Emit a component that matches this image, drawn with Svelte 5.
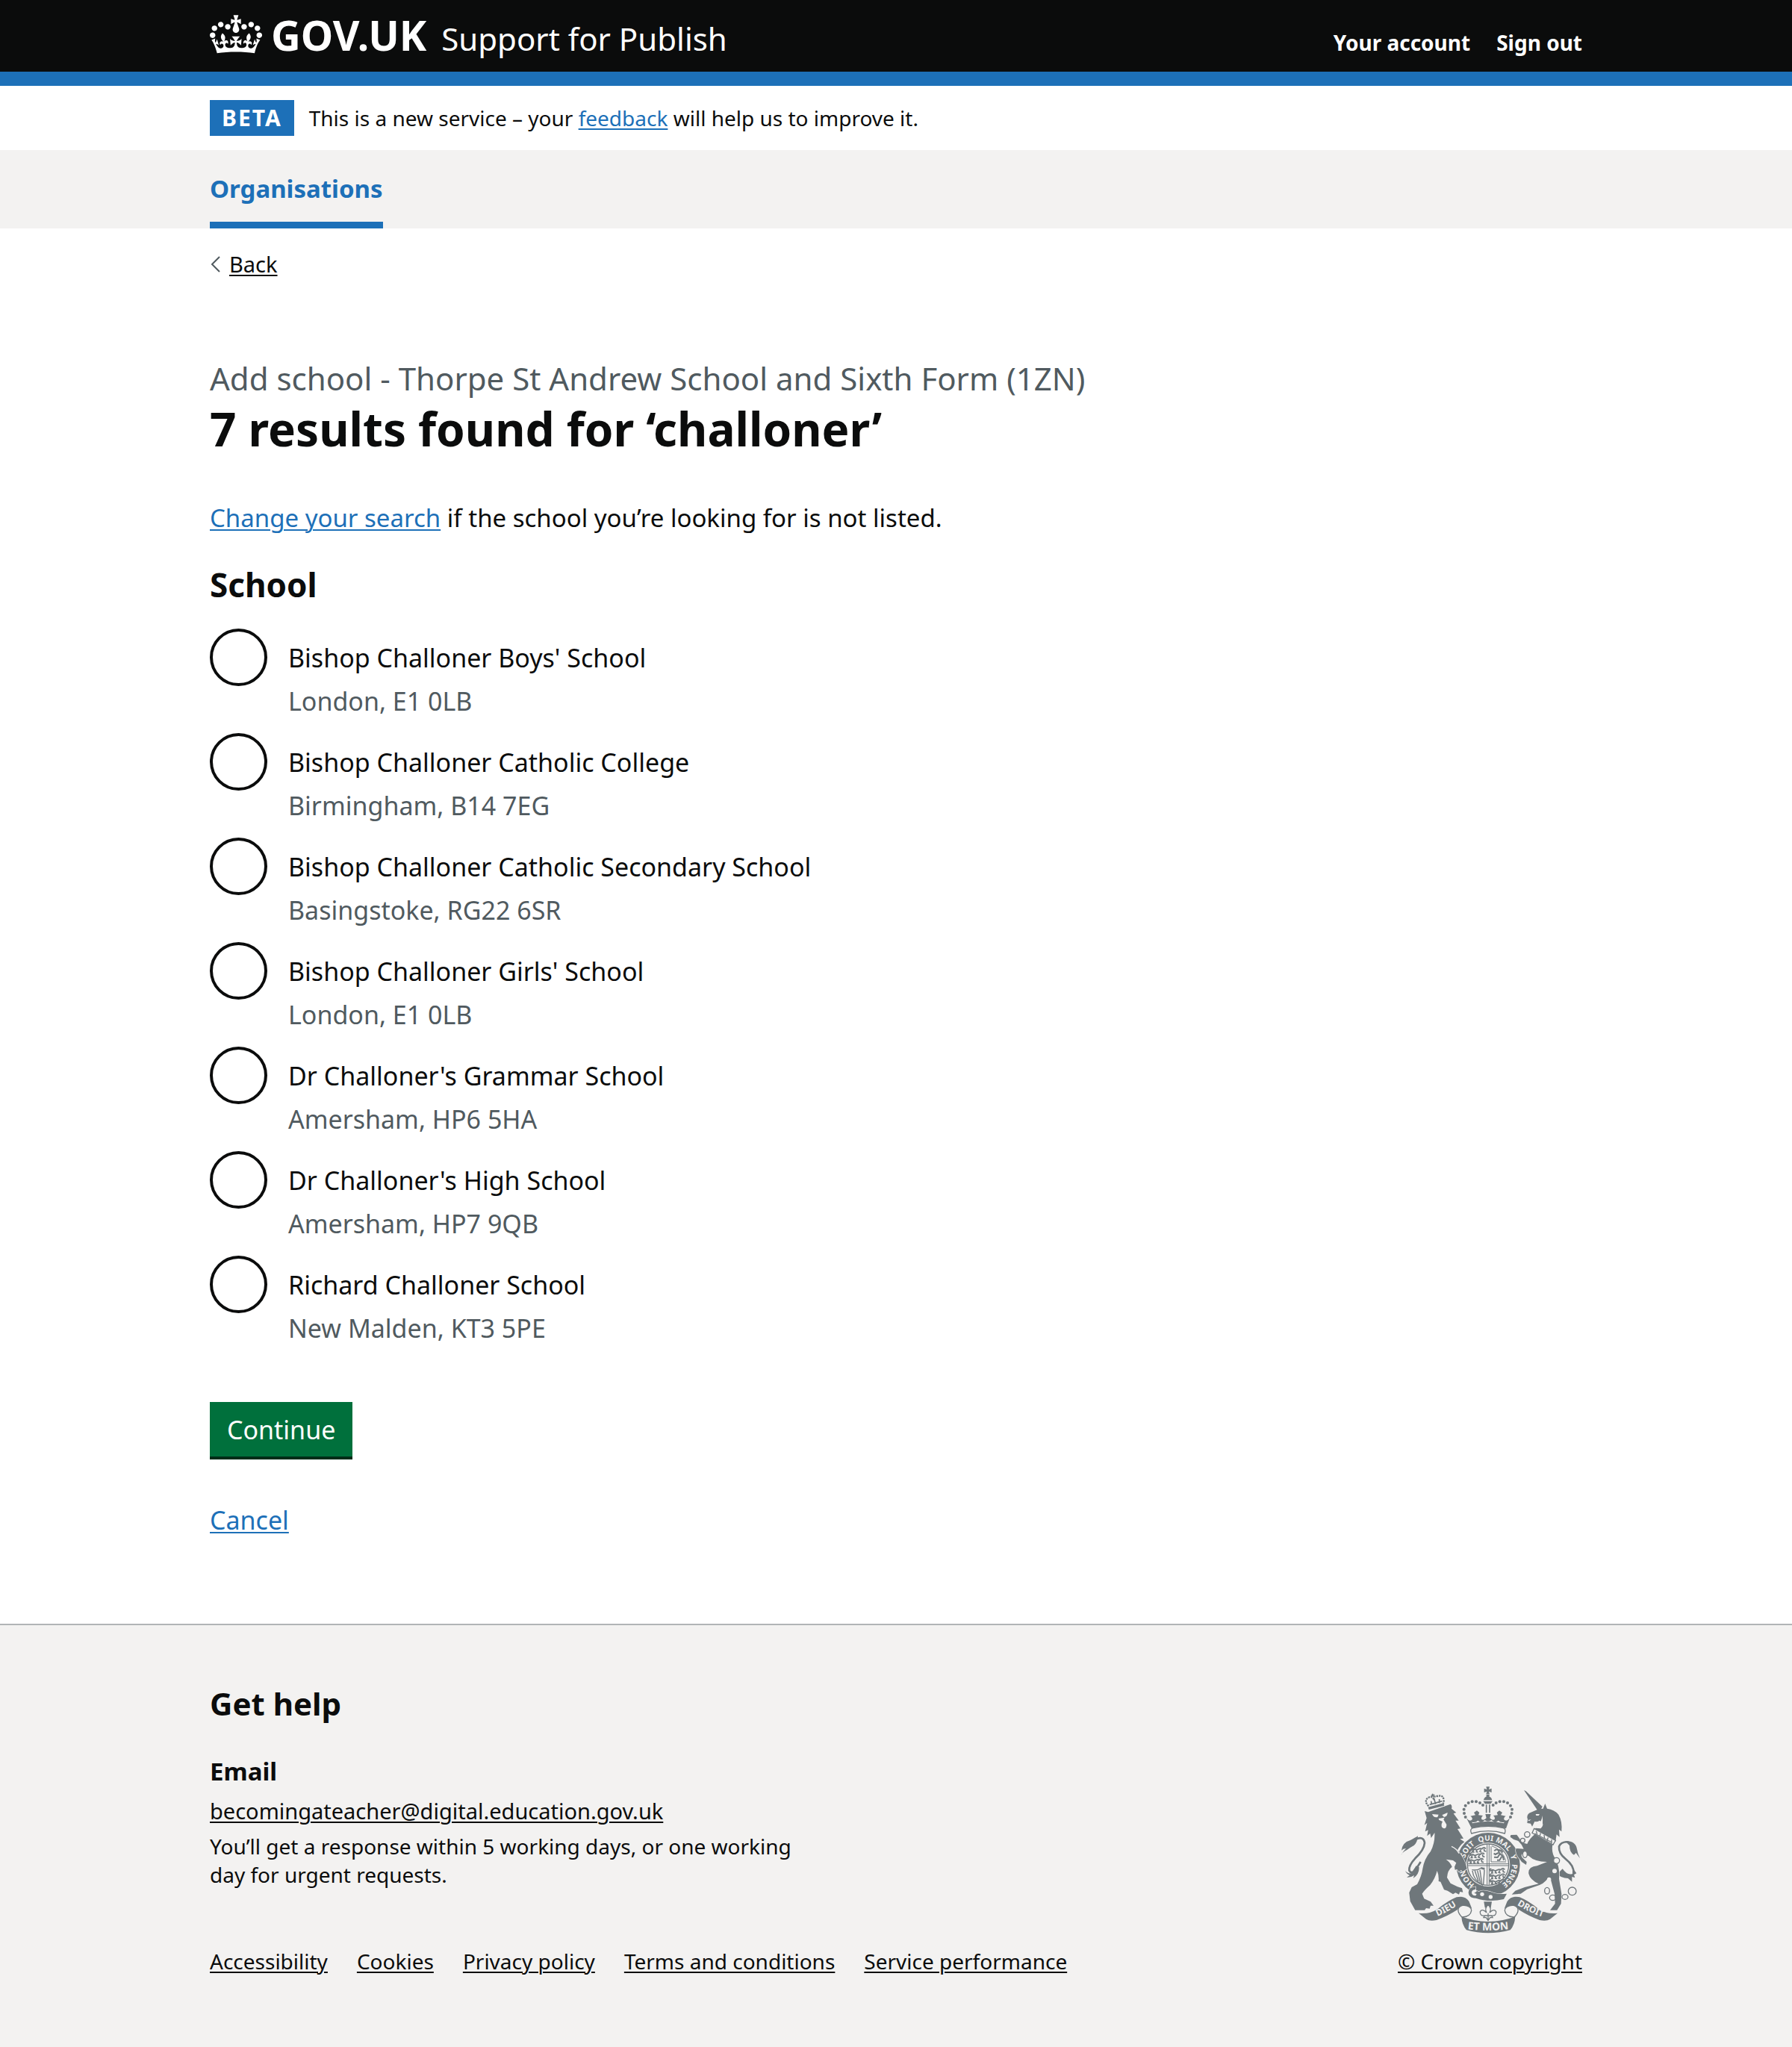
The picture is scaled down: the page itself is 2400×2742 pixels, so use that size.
<script>
  const schools = [
    { id: 'bishop-challoner-boys', name: "Bishop Challoner Boys' School", place: 'London, E1 0LB' },
    { id: 'bishop-challoner-college', name: 'Bishop Challoner Catholic College', place: 'Birmingham, B14 7EG' },
    { id: 'bishop-challoner-secondary', name: 'Bishop Challoner Catholic Secondary School', place: 'Basingstoke, RG22 6SR' },
    { id: 'bishop-challoner-girls', name: "Bishop Challoner Girls' School", place: 'London, E1 0LB' },
    { id: 'dr-challoners-grammar', name: "Dr Challoner's Grammar School", place: 'Amersham, HP6 5HA' },
    { id: 'dr-challoners-high', name: "Dr Challoner's High School", place: 'Amersham, HP7 9QB' },
    { id: 'richard-challoner', name: 'Richard Challoner School', place: 'New Malden, KT3 5PE' }
  ];

  const footerLinks = ['Accessibility', 'Cookies', 'Privacy policy', 'Terms and conditions', 'Service performance'];

  // Pearls on the arches of the central crown, left half; mirrored for the right.
  const pearls = [[362, 192], [357, 177], [356, 161], [362, 146], [374, 135], [389, 130], [405, 130], [420, 135], [432, 144]];

  // Rows of walking lions in the first and fourth quarters of the shield.
  const lions = [[386, 318], [380, 340], [376, 362], [462, 402], [462, 424], [462, 446]];

  let selected = $state('');
</script>

<header class="header">
  <div class="container header-row">
    <a class="brand" href="/">
      <svg class="crown" viewBox="0 0 132 97" aria-hidden="true">
        <path d="M25 30.2c3.5 1.5 7.7-.2 9.1-3.7 1.5-3.6-.2-7.8-3.9-9.2-3.6-1.4-7.6.3-9.1 3.9-1.4 3.5.3 7.5 3.9 9zM9 39.5c3.6 1.5 7.8-.2 9.2-3.7 1.5-3.6-.2-7.8-3.9-9.1-3.6-1.5-7.6.2-9.1 3.8-1.4 3.5.3 7.5 3.8 9zM4.4 57.2c3.5 1.5 7.7-.2 9.1-3.8 1.5-3.6-.2-7.7-3.9-9.1-3.5-1.5-7.6.3-9.1 3.8-1.4 3.5.3 7.6 3.9 9.1zm38.3-21.4c3.5 1.5 7.7-.2 9.1-3.8 1.5-3.6-.2-7.7-3.9-9.1-3.6-1.5-7.6.3-9.1 3.8-1.3 3.6.4 7.7 3.9 9.1zm64.4-5.6c-3.6 1.5-7.8-.2-9.1-3.7-1.5-3.6.2-7.8 3.8-9.2 3.6-1.4 7.7.3 9.2 3.9 1.3 3.5-.4 7.5-3.9 9zm15.9 9.3c-3.6 1.5-7.7-.2-9.1-3.7-1.5-3.6.2-7.8 3.7-9.1 3.6-1.5 7.7.2 9.2 3.8 1.5 3.5-.3 7.5-3.8 9zm4.7 17.7c-3.6 1.5-7.8-.2-9.2-3.8-1.5-3.6.2-7.7 3.9-9.1 3.6-1.5 7.7.3 9.2 3.8 1.3 3.5-.4 7.6-3.9 9.1zM89.3 35.8c-3.6 1.5-7.8-.2-9.2-3.8-1.4-3.6.2-7.7 3.9-9.1 3.6-1.5 7.7.3 9.2 3.8 1.4 3.6-.3 7.7-3.9 9.1zM69.7 17.7l8.9 4.7V9.3l-8.9 2.8c-.2-.3-.5-.6-.9-.9L72.4 0H59.6l3.5 11.2c-.3.3-.6.5-.9.9l-8.8-2.8v13.1l8.8-4.7c.3.3.6.7.9.9l-5 15.4v.1c-.2.8-.4 1.6-.4 2.4 0 4.1 3.1 7.5 7 8.1h.2c.3 0 .7.1 1 .1.4 0 .7 0 1-.1h.2c4-.6 7.1-4.1 7.1-8.1 0-.8-.1-1.7-.4-2.4V34l-5.1-15.4c.4-.2.7-.6 1-.9zM66 92.8c16.9 0 32.8 1.1 47.1 3.2 4-16.9 8.9-26.7 14-33.5l-9.6-3.4c1 4.9 1.1 7.2 0 10.2-1.5-1.4-3-4.3-4.2-8.7L108.6 76c2.8-2 5-3.2 7.5-3.3-4.4 9.4-10 11.9-13.6 11.2-4.3-.8-6.3-4.6-5.6-7.9 1-4.7 5.7-5.9 8-.5 4.3-8.7-3-11.4-7.6-8.8 7.1-7.2 7.9-13.5 2.1-21.1-8 6.1-8.1 12.3-4.5 20.8-4.7-5.4-12.1-2.5-9.5 6.2 3.4-5.2 7.9-2 7.2 3.1-.6 4.3-6.4 7.8-13.5 7.2-10.3-.9-10.9-8-11.2-13.8 2.5-.5 7.1 1.8 11 7.3L80.2 60c-4.1 4.4-8 5.3-12.3 5.4 1.4-4.4 8-11.6 8-11.6H55.5s6.4 7.2 7.9 11.6c-4.2-.1-8-1-12.3-5.4l1.4 16.4c3.9-5.5 8.5-7.7 10.9-7.3-.3 5.8-.9 12.8-11.1 13.8-7.2.6-12.9-2.9-13.5-7.2-.7-5 3.8-8.3 7.1-3.1 2.7-8.7-4.6-11.6-9.4-6.2 3.7-8.5 3.6-14.7-4.6-20.8-5.8 7.6-5 13.9 2.2 21.1-4.7-2.6-11.9.1-7.7 8.8 2.3-5.5 7.1-4.2 8.1.5.7 3.3-1.3 7.1-5.7 7.9-3.5.7-9-1.8-13.5-11.2 2.5.1 4.7 1.3 7.5 3.3l-4.7-15.4c-1.2 4.4-2.7 7.2-4.3 8.7-1.1-3-.9-5.3 0-10.2l-9.5 3.4c5 6.9 9.9 16.7 14 33.5 14.8-2.1 30.8-3.2 47.7-3.2z" />
      </svg>
      <span class="wordmark">GOV.UK</span>
    </a>
    <a class="service" href="/support">Support for Publish</a>
    <nav class="account" aria-label="Account">
      <a href="/account">Your account</a>
      <a href="/sign-out">Sign out</a>
    </nav>
  </div>
</header>

<div class="container phase">
  <strong class="tag">BETA</strong>
  <span>This is a new service – your <a class="link" href="/feedback">feedback</a> will help us to improve it.</span>
</div>

<nav class="primary" aria-label="Primary">
  <div class="container primary-row">
    <a href="/organisations" aria-current="page">Organisations</a>
  </div>
</nav>

<div class="container content">
  <a class="back" href="/organisations">
    <svg viewBox="0 0 14 22" aria-hidden="true"><path d="M13 1 3 11l10 10" /></svg>
    <span>Back</span>
  </a>

  <main>
    <h1>
      <span class="caption">Add school - Thorpe St Andrew School and Sixth Form (1ZN)</span>
      7 results found for ‘challoner’
    </h1>
    <p class="lead"><a class="link" href="/search">Change your search</a> if the school you’re looking for is not listed.</p>

    <form onsubmit={(e) => e.preventDefault()}>
      <fieldset>
        <legend>School</legend>
        <div class="radios">
          {#each schools as school}
            <div class="radio">
              <input type="radio" name="school" id={school.id} value={school.id} bind:group={selected} aria-describedby="{school.id}-hint" />
              <div class="radio-text">
                <label for={school.id}>{school.name}</label>
                <div class="hint" id="{school.id}-hint">{school.place}</div>
              </div>
            </div>
          {/each}
        </div>
      </fieldset>
      <button type="submit">Continue</button>
    </form>
    <p class="cancel"><a class="link" href="/organisations">Cancel</a></p>
  </main>
</div>

<footer class="footer">
  <div class="container footer-row">
    <div class="footer-main">
      <h2>Get help</h2>
      <h3>Email</h3>
      <p class="mail"><a href="mailto:becomingateacher@digital.education.gov.uk">becomingateacher@digital.education.gov.uk</a></p>
      <p class="response">You’ll get a response within 5 working days, or one working day for urgent requests.</p>
      <ul>
        {#each footerLinks as text}
          <li><a href="/{text.toLowerCase().replaceAll(' ', '-')}">{text}</a></li>
        {/each}
      </ul>
    </div>
    <a class="copyright" href="/crown-copyright">
      <svg class="arms" viewBox="102 66 720 594" role="img" aria-label="Royal coat of arms">
        <defs>
          <path id="garter-line" d="M453 479A96 96 0 0 1 453 287A96 96 0 0 1 453 479" />
          <path id="dieu-line" d="M216 604Q290 578 356 528" />
          <path id="mon-line" d="M340 639Q453 656 566 639" />
          <path id="droit-line" d="M542 526Q605 574 704 604" />
        </defs>

        <!-- garter and shield -->
        <circle cx="453" cy="383" r="128" />
        <circle class="paper" cx="453" cy="383" r="88" />
        <circle class="line" cx="453" cy="383" r="83" stroke-width="4" />
        <path class="line" d="M449 302v162M457 302v162M372 380h162M372 387h162" stroke-width="3" />
        {#each lions as [x, y]}
          <path class="line" transform="translate({x} {y})" d="M2 8q4-9 12-5q5 5 12 1q10-6 16-2q4-6 11-5l5 4M10 5l-5 10h7M22 5l-2 9 7 1M38 4l-4 9 7 2M50 1l2 9 7 2M1 8l-3-8 6-3" stroke-width="5" />
        {/each}
        <path class="line" d="M465 310v62h60M468 308q42 14 56 60" stroke-width="3" />
        <path class="line" d="M478 328q8-9 16-3l4 12 14 12 4 16M494 336l-12 6-6-4M499 342l-8 12-14-1M508 350l-9 15h-10M494 324l12 2 6 8" stroke-width="6" />
        <path class="line" d="M388 404q22 4 38-8q12 0 12 12l-4 54M390 408q4 38 42 58M400 408l14 42M410 407l12 50M420 404l8 56" stroke-width="4" />
        <path class="line" d="M424 396q10 8 14 0" stroke-width="6" />
        <g class="garter-text">
          <text><textPath href="#garter-line" startOffset="58">HON</textPath></text>
          <text><textPath href="#garter-line" startOffset="176">SOIT</textPath></text>
          <text><textPath href="#garter-line" startOffset="263">QUI</textPath></text>
          <text><textPath href="#garter-line" startOffset="330">MAL</textPath></text>
          <text><textPath href="#garter-line" startOffset="414">Y</textPath></text>
          <text><textPath href="#garter-line" startOffset="450">PENSE</textPath></text>
        </g>

        <!-- buckle and pendant -->
        <path class="edged" d="M402 472q-28 2-28 24q2 22 30 22q52 18 112 4l12-22q-40 4-66-8q-34-10-46 0l-14-6z" />
        <path class="paper" d="M404 482q-16 2-17 12q-1 12 16 14l4-7-10-4 10-6z" />
        <circle class="paper" cx="429" cy="502" r="8" />
        <circle class="paper" cx="463" cy="513" r="8" />
        <path d="M436 532h32l-4 24h-24z" />
        <path class="line paper" d="M453 544q-16 16-6 32q-18-18-26-4q-2 18 18 16l-4 8h10l8 12 8-12h10l-4-8q20 2 18-16q-8-14-26 4q10-16-6-32zM438 588h30M453 578v28" stroke-width="4" />

        <!-- central crown -->
        <path d="M445 70h14l-3 11 11-4v16l-11-4 3 11h-14l3-11-11 4v-16l11 4z" />
        <path d="M446 101h12v8h-12zM435 124q2-14 17-16q15 2 17 16zM433 128h38l-8 11h-22z" />
        <path class="line" d="M446 142v33M459 142v33" stroke-width="5" />
        {#each pearls as [x, y]}
          <circle cx={x} cy={y} r="6" />
          <circle cx={905 - x} cy={y} r="6" />
        {/each}
        <path d="M366 196q14 18 24 4q-2-10-8-12l20-4-6-10 12-8 10 8-4 10 18 2q-8 6-6 14q10 8 20-4l-4-16h22l-4 16q10 12 20 4q2-8-6-14l18-2-4-10 10-8 12 8-6 10 20 4q-6 2-8 12q10 14 24-4l-15 42q-68-16-138 0z" />
        <path class="paper" d="M388 212q14 4 24-6q14 12 28-2q12 12 26 0q14 14 28 2q10 10 24 6l-2 5q-64-16-126 0z" />
        <path class="line paper" d="M386 258q-8-18 6-22q62-14 122 0q12 4 6 22q-66-20-134 0z" stroke-width="4" />

        <!-- lion -->
        <path class="line" d="M160 282q34-16 38 14q-2 28-38 62q-26 28-24 48q10 22 32-12l14-22" stroke-width="8" />
        <path d="M103 346q10-18 20-28q-12 0-18 8q4-32 34-40q22-12 32-18q-2 26-16 38q-18 10-28 18q-18 8-24 22zM120 408q10 12 24 10l20-30 12 6q0 30-24 44l4-12q-14 10-30 8l12-8q-12-4-18-18z" />
        <path class="edged" d="M198 168L212 172L302 140Q310 146 306 158L325 174L314 178L335 206L322 206L342 238L330 240L354 278L340 280L358 292Q340 305 330 325L345 345Q362 370 368 400L350 412L345 404L336 412L328 402L320 404L318 392L325 376L312 366L284 362Q300 372 308 392Q290 405 288 435L302 458L330 472L348 478L352 494L340 492L336 503L322 496L312 502L290 488L276 484L262 452L254 450Q256 425 248 408Q240 440 220 465Q195 488 188 500L196 520L222 532L234 548L222 548L218 560L204 558L198 566L160 566L140 530L136 496L146 474L168 462Q186 430 190 400Q196 360 222 330Q240 295 238 255L224 276L220 258L208 268L212 244L200 250L208 216L197 224L206 196Z" />
        <path class="paper" d="M228 180l26 2-4 10q-16 4-22-12zM268 184l22-10q0 16-14 18zM254 198l24-4-4 8 12 20q0 16-10 16q-12-2-10-18l4-10-14-6z" />
        <path class="paper-line" d="M306 310Q326 318 336 338" stroke-width="4" />
        <path class="edged" d="M212 152l62-16 3 10-62 16z" />
        <path class="line" d="M214 148q-20-20-2-34q14-8 22 4q4-12 14-10q26-6 26 14q2 10-2 16" stroke-width="7" stroke-dasharray="7 3" />
        <path class="line" d="M226 142l-2-14M242 140l-6-22M257 136v-16M218 142l50-14M229 98l4 14M224 106l14-3" stroke-width="5" />

        <!-- unicorn -->
        <path d="M597 84l8 4 66 62-8 16-12-2z" />
        <path d="M612 200q-6-14 6-24l38-16 18-2 8-20 8 20q30 4 46 24q16 28 12 68l-10-8 2 30-12-10-4 28-88-44 8-10 20 2q20-20-4-32q-10 6-20 4l-10 20-6-12-14-2z" />
        <path class="paper" d="M644 180l16 0-4 6h-10zM648 224q22-10 22-38q8 34-8 50zM612 204l14-2-8 6z" />
        <path class="line" d="M776 292q-30-2-38 18q-2 28 26 50q36 28 32 58" stroke-width="8" />
        <path d="M762 288q42-2 48 32q2 16 12 38l-16-22-8 8q-18-10-18-38zM752 400q20 28 40 20l2-22 14 20-10 6 4 12-12-4 0 20-16-14q-30 0-46-20l10-4z" />
        <path class="edged" d="M640 262L712 304Q706 335 724 360Q742 395 738 440L748 500L746 540L730 566L702 566L722 540L720 500L704 440L694 436Q680 462 640 472L610 482L584 500L548 503L562 488L600 474L656 460Q622 445 616 420Q612 392 650 388L690 372Q640 372 616 348L590 340Q584 345 590 355L608 372L606 384L588 372L572 350Q560 330 566 318L596 320Q588 300 574 288L556 282L542 272L544 264L568 263Q578 275 588 294L610 300Q618 280 640 262Z" />
        <path class="line paper" d="M638 238l86 48-10 17-84-47z" stroke-width="4" />
        <path class="line" d="M646 248l4 12M664 256l-4 14M678 264l2 16M694 274l-4 14M708 282l0 16M640 258l70 36" stroke-width="4" />
        <g class="line" stroke-width="4">
          <circle cx="610" cy="262" r="11" />
          <ellipse cx="690" cy="488" rx="10" ry="13" />
          <ellipse cx="713" cy="516" rx="13" ry="11" />
          <ellipse cx="762" cy="513" rx="12" ry="10" />
          <circle cx="791" cy="490" r="16" />
        </g>
        <g class="line paper" stroke-width="4">
          <circle cx="592" cy="286" r="9" />
          <ellipse cx="601" cy="342" rx="9" ry="13" />
          <circle cx="728" cy="367" r="12" />
        </g>
        <circle class="paper" cx="720" cy="409" r="9" />
        <circle class="paper" cx="698" cy="442" r="8" />

        <!-- motto ribbon -->
        <path d="M174 578Q216 584 252 560Q292 528 326 514Q360 506 376 530L388 560Q374 546 352 546Q336 550 330 564Q290 590 246 606Q218 612 204 602Z" />
        <path d="M732 578Q690 584 654 560Q614 528 580 514Q546 506 530 530L518 560Q532 546 554 546Q570 550 576 564Q616 590 660 606Q688 612 702 602Z" />
        <path class="line" d="M352 546q-24 6-18 28q6 16 22 26M352 546q34 2 34 22q-4 24-36 26M554 546q24 6 18 28q-6 16-22 26M554 546q-34 2-34 22q4 24 36 26" stroke-width="4" />
        <path d="M346 592q50 20 107 20q58 0 109-20q-2 34-20 54q-42 12-89 12q-44 0-87-12q-18-20-20-54z" />
        <text class="motto"><textPath href="#dieu-line" startOffset="50%">DIEU</textPath></text>
        <text class="motto large"><textPath href="#mon-line" startOffset="50%">ET MON</textPath></text>
        <text class="motto"><textPath href="#droit-line" startOffset="50%">DROIT</textPath></text>
      </svg>
      <span>© Crown copyright</span>
    </a>
  </div>
</footer>

<style>
  :global(body) {
    background: #fff;
    color: #0b0c0c;
    font-family: "Noto Sans", "Open Sans", sans-serif;
    font-size: 28px;
    line-height: 38px;
  }
  h1, h2, h3, p, ul, fieldset, legend {
    margin: 0;
    padding: 0;
    border: 0;
  }
  a {
    color: inherit;
    text-decoration-thickness: 2px;
    text-underline-offset: 3px;
  }
  .link { color: #1d70b8; }
  .container {
    box-sizing: border-box;
    width: calc(100% - 60px);
    max-width: 1838px;
    margin: 0 auto;
  }

  .header {
    background: #0b0c0c;
    border-bottom: 19px solid #1d70b8;
    color: #fff;
  }
  .header-row {
    display: flex;
    flex-wrap: wrap;
    align-items: baseline;
    gap: 0 20px;
    padding: 20px 0 17px;
  }
  .header a { text-decoration: none; }
  .brand {
    display: flex;
    align-items: baseline;
    gap: 12px;
  }
  .crown {
    width: 70px;
    height: 52px;
    align-self: flex-start;
    fill: #fff;
  }
  .wordmark {
    font-size: 55px;
    font-weight: 700;
    line-height: 54px;
  }
  .service {
    font-size: 42px;
    line-height: 54px;
  }
  .account {
    display: flex;
    gap: 35px;
    margin-left: auto;
    font-weight: 700;
  }

  .phase {
    display: flex;
    gap: 20px;
    padding: 19px 0;
    line-height: 48px;
  }
  .tag {
    padding: 0 16px;
    background: #1d70b8;
    color: #fff;
    font-size: 30px;
    letter-spacing: 2px;
  }

  .primary { background: #f3f2f1; }
  .primary-row { display: flex; }
  .primary a {
    padding: 28px 0 20px;
    border-bottom: 9px solid #1d70b8;
    color: #1d70b8;
    font-size: 33px;
    font-weight: 700;
    line-height: 48px;
    text-decoration: none;
  }

  .content { padding: 29px 0 117px; }
  .back {
    display: inline-flex;
    align-items: center;
    gap: 12px;
    font-size: 29px;
    text-decoration: none;
  }
  .back span {
    text-decoration: underline;
    text-decoration-thickness: 2px;
    text-underline-offset: 3px;
  }
  .back svg {
    width: 14px;
    height: 22px;
    fill: none;
    stroke: #505a5f;
    stroke-width: 2;
  }
  main { padding-top: 105px; }
  h1 {
    font-size: 62px;
    line-height: 76px;
  }
  .caption {
    display: block;
    color: #505a5f;
    font-size: 42px;
    font-weight: 400;
    line-height: 58px;
  }
  .lead {
    margin-top: 60px;
    font-size: 33px;
    line-height: 44px;
  }
  fieldset { margin-top: 42px; }
  legend {
    font-size: 44px;
    font-weight: 700;
    line-height: 50px;
  }
  .radios {
    display: flex;
    flex-direction: column;
    gap: 14px;
    padding-top: 34px;
  }
  .radio {
    display: flex;
    gap: 28px;
  }
  input {
    appearance: none;
    flex: none;
    box-sizing: border-box;
    width: 77px;
    height: 77px;
    margin: 0;
    border: 4px solid #0b0c0c;
    border-radius: 50%;
    background: #fff;
  }
  input:checked { background: radial-gradient(#0b0c0c 45%, #fff 47%); }
  .radio-text {
    padding-top: 10px;
    font-size: 34px;
    line-height: 58px;
  }
  label { display: block; }
  .hint { color: #505a5f; }
  button {
    display: block;
    margin-top: 70px;
    padding: 15px 23px 14px;
    border: 0;
    background: #00703c;
    box-shadow: 0 4px 0 #002d18;
    color: #fff;
    font: 34px/44px "Noto Sans", "Open Sans", sans-serif;
  }
  .cancel {
    margin-top: 63px;
    font-size: 34px;
    line-height: 44px;
  }

  .footer {
    border-top: 2px solid #b1b4b6;
    background: #f3f2f1;
  }
  .footer-row {
    display: flex;
    flex-wrap: wrap;
    align-items: flex-end;
    justify-content: space-between;
    gap: 40px;
    padding: 80px 0 96px;
  }
  h2 {
    font-size: 42px;
    line-height: 50px;
  }
  h3 {
    margin-top: 44px;
    font-size: 33px;
    line-height: 44px;
  }
  .mail {
    margin-top: 12px;
    font-size: 29px;
  }
  .response {
    max-width: 800px;
    margin-top: 9px;
  }
  ul {
    display: flex;
    flex-wrap: wrap;
    gap: 12px 39px;
    margin-top: 78px;
    list-style: none;
  }
  .copyright {
    display: flex;
    flex-direction: column;
    align-items: center;
    gap: 18px;
  }
  .arms {
    width: 240px;
    height: 198px;
    fill: #6f777b;
  }
  .arms .paper { fill: #f3f2f1; }
  .arms .line {
    fill: none;
    stroke: #6f777b;
  }
  .arms .line.paper { fill: #f3f2f1; }
  .arms .edged {
    stroke: #f3f2f1;
    stroke-width: 4;
    paint-order: stroke;
  }
  .arms .paper-line {
    fill: none;
    stroke: #f3f2f1;
  }
  .garter-text {
    fill: #f3f2f1;
    font-size: 30px;
    font-weight: 700;
  }
  .motto {
    fill: #f3f2f1;
    font-size: 36px;
    font-weight: 700;
    text-anchor: middle;
  }
  .large { font-size: 42px; }
</style>
